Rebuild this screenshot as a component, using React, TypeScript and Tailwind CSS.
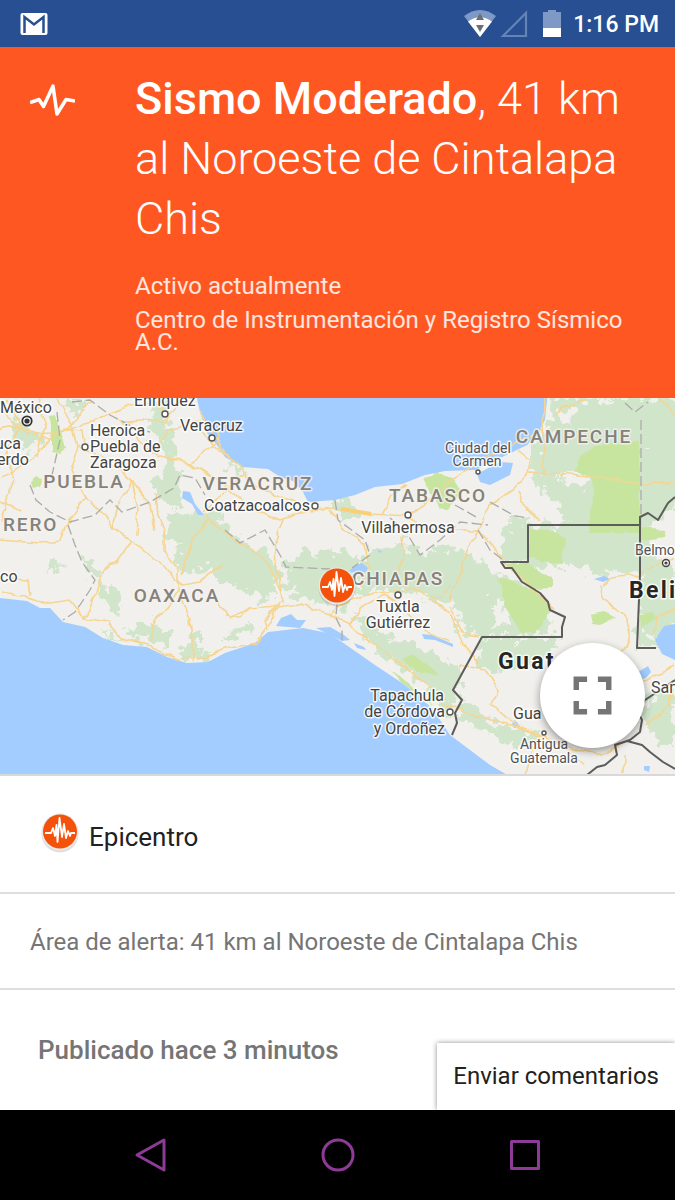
import type { ReactNode } from "react";
import { MdFullscreen } from "react-icons/md";

const GULF =
  "M195 390 L200 412 L207 433 L217 445 L225 457 L242 467 L268 469 L280 477 L293 481 L303 492 L308 502 L335 500 L355 495 L375 487 L402 484 L425 475 L445 471 L475 470 L500 458 L527 445 L537 435 L545 420 L548 390 Z";
const PACIFIC =
  "M0 598 L27 601 L40 608 L50 608 L63 622 L85 627 L103 638 L123 645 L147 647 L167 657 L187 663 L208 662 L225 653 L255 643 L268 632 L303 628 L328 633 L342 642 L375 665 L405 685 L432 708 L450 735 L470 750 L490 765 L516 780 L0 780 Z";

const LAKES = [
  "M477 474 L500 462 L513 463 L510 475 L490 485 L480 482 Z",
  "M276 626 L281 618 L291 614 L297 620 L306 620 L300 628 Z",
  "M316 628 L330 627 L344 635 L350 640 L342 641 L328 634 Z",
  "M354 643 L364 647 L366 650 L357 648 Z",
  "M349 571 L355 566 L362 563 L368 568 L366 572 L354 573 Z",
  "M183 491 L190 492 L195 504 L204 515 L198 515 L192 504 L182 498 Z",
  "M422 634 L432 635 L453 644 L453 647 L435 640 L424 639 Z",
  "M594 579 L604 576 L610 579 L603 582 Z",
  "M655 640 L664 626 L675 624 L675 660 L662 654 Z",
  "M638 672 L648 666 L651 672 L646 678 L640 680 Z",
  "M512 723 L517 722 L520 727 L514 728 Z",
  "M377 550 L382 551 L380 553 Z",
  "M644 766 L650 766 L649 772 L644 770 Z",
];

const FORESTS = [
  "M548 398 L685 398 L685 500 L660 520 L645 530 L660 560 L685 580 L685 610 L656 648 L637 648 L640 577 L602 572 L568 566 L552 572 L528 562 L528 527 L568 524 L556 510 L542 495 L535 475 L530 462 L535 445 L548 432 L552 418 Z",
  "M508 515 L528 518 L528 562 L502 561 L506 540 Z",
  "M155 398 L168 402 L168 420 L172 440 L172 458 L180 480 L185 505 L175 508 L158 500 L155 480 L165 470 L158 440 L148 425 Z",
  "M165 512 L190 515 L212 510 L225 525 L240 540 L268 552 L278 572 L275 598 L262 600 L240 590 L218 582 L215 562 L195 575 L180 570 L172 555 L180 548 L168 540 Z",
  "M286 572 L298 552 L330 550 L348 552 L362 562 L350 575 L352 600 L338 610 L310 600 L288 596 Z",
  "M362 560 L372 548 L402 543 L430 555 L440 545 L468 552 L498 575 L522 585 L548 608 L545 632 L482 637 L462 632 L455 605 L430 600 L412 592 L380 590 L356 596 Z",
  "M352 615 L372 622 L390 640 L410 645 L430 652 L455 664 L462 672 L452 700 L450 718 L430 690 L405 672 L375 650 Z",
  "M484 638 L560 638 L555 652 L525 662 L500 672 L478 668 L474 655 Z",
  "M460 698 L480 710 L490 722 L520 728 L545 735 L535 748 L500 742 L478 730 L458 722 Z",
  "M128 628 L150 622 L172 632 L165 645 L140 640 Z",
  "M175 652 L190 645 L192 632 L200 634 L200 650 L210 656 L205 660 L185 658 Z",
  "M100 590 L112 586 L124 596 L120 612 L105 608 Z",
  "M103 632 L110 630 L112 640 L124 643 L110 645 Z",
  "M335 500 L350 498 L358 512 L345 522 L337 515 Z",
  "M222 638 L235 628 L256 622 L258 627 L240 636 L226 644 Z",
  "M645 700 L675 690 L675 745 L655 740 L643 720 Z",
  "M18 418 L32 430 L44 440 L28 450 L14 436 Z",
  "M82 560 L95 562 L98 572 L86 574 Z",
  "M48 560 L62 564 L56 572 L46 568 Z",
  "M225 462 L238 466 L244 474 L232 470 Z",
  "M70 398 L82 398 L82 412 L72 416 Z",
];

const PARKS = [
  "M595 445 L640 442 L640 533 L590 533 L593 477 L575 472 L580 456 Z",
  "M530 528 L548 530 L565 538 L563 565 L540 562 L530 558 Z",
  "M498 578 L522 585 L535 590 L552 606 L535 633 L522 633 L508 612 Z",
  "M503 564 L528 563 L540 572 L553 576 L553 587 L535 588 L522 582 L512 570 Z",
  "M49 416 L56 415 L60 432 L66 446 L60 456 L52 454 L52 440 Z",
  "M30 483 L37 477 L43 479 L40 487 L33 489 Z",
  "M425 480 L438 473 L455 478 L462 492 L450 510 L440 506 L430 494 Z",
  "M390 670 L400 676 L412 687 L432 704 L424 702 L402 683 Z",
  "M402 660 L415 655 L432 668 L440 676 L425 672 L412 668 Z",
  "M640 528 L664 530 L666 537 L642 540 Z",
  "M590 615 L605 612 L616 618 L600 625 L592 624 Z",
  "M640 614 L654 612 L656 620 L640 624 Z",
];

const CLEARINGS = [
  "M558 412 L565 406 L575 412 L572 420 L558 418 Z",
  "M556 478 L582 472 L592 480 L576 486 Z",
  "M540 500 L556 498 L560 506 L548 514 Z",
  "M494 598 L502 600 L510 622 L494 624 Z",
  "M600 399 L612 399 L608 405 L600 404 Z",
  "M642 448 L648 444 L646 454 Z",
  "M655 528 L675 505 L685 540 L668 540 Z",
  "M540 568 L552 562 L560 570 L552 574 Z",
  "M642 642 L656 640 L656 648 L640 648 Z",
];

const ROADS = [
  "M0 430 C20 420 36 438 58 432 S95 420 118 410 S145 400 165 412",
  "M0 476 Q20 470 35 455 T70 425 L92 402",
  "M8 400 L20 425 L5 460 L15 480 L2 520",
  "M0 412 L25 432 L50 440 M38 398 L45 425 L38 455 M62 428 L82 430 L84 445",
  "M58 398 L74 430 L78 447 L100 455 L132 480 L142 494 L150 504 L155 530",
  "M78 447 L70 470 L80 490 L85 498 L105 515 L113 528 L132 540 L150 555 L168 570 L182 585 L200 582 L222 565",
  "M85 498 L68 520 L60 540 L40 543 L0 540",
  "M132 540 L118 562 L105 570 L96 590 L90 610 L83 618",
  "M132 480 L118 505 L113 528 M132 480 L138 510 L136 535",
  "M155 495 L157 515 L165 535 L165 550 L178 570 L178 590 L165 610 L152 625 L153 643",
  "M178 590 L190 620 L192 640 L192 660",
  "M0 592 L25 596 L42 604 L70 600 L83 618 L108 622 L120 638 L150 646 L178 658 L205 656 L225 648 L255 642 L268 625 L278 607 L300 604 L330 615 L350 625 L370 640 L395 660 L425 682 L445 705 L465 712 L500 722 L530 732 L550 745",
  "M155 456 L192 464 L215 442 L220 430",
  "M192 464 L225 485 L245 505 L280 520 L310 510 L335 508 L370 514 L410 516 L430 500 L450 480 L515 442 L545 430",
  "M118 420 L138 440 L155 456 L168 430 L202 420",
  "M188 398 L165 420 L120 422",
  "M202 432 L220 452 L242 465 L245 478 L262 490 L290 500 L310 510",
  "M203 512 L218 498 L245 475",
  "M203 512 L225 532 L250 548 L270 565 L278 585 L284 604",
  "M208 518 L190 545 L182 575",
  "M283 520 L275 540 L278 570 L282 600 L265 620",
  "M330 510 L345 530 L365 545 L370 570 L360 585",
  "M382 515 L392 495 L405 485",
  "M410 516 L420 530 L478 530 L490 505 L512 490 L528 475 L530 460 L518 450",
  "M478 530 L468 548 L460 575 L450 600",
  "M478 530 L492 545 L505 565 L540 595 L555 608",
  "M545 399 L543 473 M528 473 L570 475 L600 478 L640 484 L675 483",
  "M518 490 L525 505 L538 521",
  "M555 412 L585 400 M660 399 L675 415",
  "M280 606 L250 608 L230 618 L218 600",
  "M278 607 L264 620 L267 631 M225 615 L240 617 L250 608",
  "M330 615 L350 600 L375 593 L410 590 L440 598 L450 585",
  "M350 625 L358 610 L385 594 L400 605 L430 635 L450 642",
  "M395 583 L404 552 L402 535 M430 600 L450 612 L465 645 L478 665",
  "M450 605 L463 633 L480 635 M460 665 L485 670 L497 690 L492 705 L515 725 L540 735",
  "M540 735 L565 748 L585 765 M540 735 L530 755 L525 774",
  "M600 585 L604 600 L625 615 L630 640 L610 665 L645 680 L675 665",
  "M602 585 L612 578 L635 575 L660 565 L675 558",
  "M653 635 L658 618 L675 608 M645 725 L660 715 L675 690 M625 755 L625 774 M560 745 L600 755 L628 742",
  "M0 578 L28 580 L30 596 M200 410 L225 455 M0 502 L20 510",
];

const STATE_LINES = [
  "M57 412 L60 440 L52 475 M72 402 L90 400 L110 415 L135 428 L150 432",
  "M30 485 L36 500 L50 512 L70 522 L95 515 L110 500 L122 512 L150 502 L174 488 L180 475 L195 478 L205 495",
  "M68 525 L75 545 L82 562 L95 580 L90 590 L82 602 L75 612 L63 620",
  "M225 530 L240 543 L265 530 L280 555 L286 567 L330 569",
  "M335 500 L338 520 L365 540 L370 555 L352 568",
  "M337 604 L336 618 L342 630 L342 641",
  "M390 518 L405 530 L420 555 L440 540 L460 522 L488 525 M455 505 L478 518 M490 502 L515 516 L528 518",
  "M641 420 L641 515 M625 403 L635 412 L648 402",
  "M478 530 L490 550 L503 560",
];

const BORDERS = [
  "M640 525 L528 525 L528 562 L501 562 L505 568 L512 568 L522 582 L532 588 L540 593 L548 602 L550 610 L565 617 L562 627 L562 637 L482 637 L453 690 L462 700 L455 713 L457 723 L452 735",
  "M675 497 L668 503 L658 520 L648 513 L640 517 L640 575 L637 648 L656 648",
  "M587 775 L597 767 L605 765 L617 755 L615 745 L630 740 L640 732 L642 720 L637 710 L645 700 L675 680",
  "M627 741 L642 745 L650 752 L663 762 L675 769",
];

type Label = { text: string; x: number; y: number; end?: boolean; mid?: boolean };

const STATES: Label[] = [
  { text: "PUEBLA", x: 84, y: 488, mid: true },
  { text: "VERACRUZ", x: 258, y: 490, mid: true },
  { text: "TABASCO", x: 438, y: 502, mid: true },
  { text: "CAMPECHE", x: 574, y: 443, mid: true },
  { text: "OAXACA", x: 177, y: 602, mid: true },
  { text: "CHIAPAS", x: 398, y: 585, mid: true },
  { text: "RERO", x: 3, y: 531 },
];

const CITIES: Label[] = [
  { text: "México", x: 0, y: 413 },
  { text: "Enriquez", x: 134, y: 406 },
  { text: "Heroica", x: 90, y: 436 },
  { text: "Puebla de", x: 90, y: 452 },
  { text: "Zaragoza", x: 90, y: 468 },
  { text: "Veracruz", x: 180, y: 431 },
  { text: "uca", x: -5, y: 449 },
  { text: "erdo", x: -3, y: 465 },
  { text: "co", x: 0, y: 582 },
  { text: "Coatzacoalcos", x: 204, y: 511 },
  { text: "Villahermosa", x: 408, y: 533, mid: true },
  { text: "Tuxtla", x: 398, y: 612, mid: true },
  { text: "Gutiérrez", x: 398, y: 628, mid: true },
  { text: "Tapachula", x: 444, y: 701, end: true },
  { text: "de Córdova", x: 445, y: 717, end: true },
  { text: "y Ordoñez", x: 445, y: 734, end: true },
  { text: "Gua", x: 513, y: 719 },
  { text: "San", x: 651, y: 693 },
];

const TOWNS: Label[] = [
  { text: "Ciudad del", x: 478, y: 453, mid: true },
  { text: "Carmen", x: 477, y: 466, mid: true },
  { text: "Belmopán", x: 635, y: 555 },
  { text: "Antigua", x: 544, y: 749, mid: true },
  { text: "Guatemala", x: 544, y: 763, mid: true },
];

const COUNTRIES: Label[] = [
  { text: "Guatemala", x: 498, y: 669 },
  { text: "Belice", x: 629, y: 598 },
];

const DOTS = [
  [165, 414, 3], [212, 438, 3], [85, 447, 3], [315, 506, 3], [408, 515, 3],
  [398, 595, 3], [450, 712, 3], [478, 472, 2], [544, 733, 2],
];

function Labels({ items, className }: { items: Label[]; className: string }) {
  return (
    <g className={className} strokeWidth="3" strokeLinejoin="round" paintOrder="stroke">
      {items.map((l) => (
        <text key={l.text} x={l.x} y={l.y} textAnchor={l.mid ? "middle" : l.end ? "end" : "start"}>
          {l.text}
        </text>
      ))}
    </g>
  );
}

function Shapes({ items }: { items: string[] }) {
  return (
    <>
      {items.map((d) => (
        <path key={d} d={d} />
      ))}
    </>
  );
}

function RegionMap() {
  return (
    <svg className="block h-full w-full" viewBox="0 398 675 376" preserveAspectRatio="xMidYMid slice" role="img" aria-label="Mapa del epicentro">
      <defs>
        <filter id="ragged" x="-5%" y="-5%" width="110%" height="110%" colorInterpolationFilters="sRGB">
          <feTurbulence type="fractalNoise" baseFrequency="0.1" numOctaves="4" seed="4" />
          <feDisplacementMap in="SourceGraphic" scale="26" xChannelSelector="R" yChannelSelector="G" />
        </filter>
        <filter id="winding" x="-5%" y="-5%" width="110%" height="110%" colorInterpolationFilters="sRGB">
          <feTurbulence type="fractalNoise" baseFrequency="0.06" numOctaves="2" seed="9" />
          <feDisplacementMap in="SourceGraphic" scale="8" xChannelSelector="R" yChannelSelector="G" />
        </filter>
      </defs>
      <rect x="0" y="390" width="675" height="390" fill="#f2f0ed" />
      <g filter="url(#ragged)">
        <g fill="#d1e5cb"><Shapes items={FORESTS} /></g>
        <g fill="#f2f0ed"><Shapes items={CLEARINGS} /></g>
      </g>
      <g filter="url(#winding)" fill="#c8e5a0"><Shapes items={PARKS} /></g>
      <g fill="#a3ccff">
        <path d={GULF} />
        <path d={PACIFIC} />
        <Shapes items={LAKES} />
      </g>
      <g filter="url(#winding)" fill="none" stroke="#f5d591" strokeWidth="1.6" strokeLinejoin="round">
        <Shapes items={ROADS} />
      </g>
      <path d="M341 509 L371 514" stroke="#f9cf78" strokeWidth="4" />
      <g fill="none" stroke="#adaba8" strokeWidth="1.3" strokeDasharray="10 4">
        <Shapes items={STATE_LINES} />
      </g>
      <g fill="none" stroke="#5c5c5a" strokeWidth="2" strokeLinejoin="round">
        <Shapes items={BORDERS} />
      </g>
      <Labels items={STATES} className="fill-[#85827a] stroke-[#f5f3f0]/80 text-[19px] font-medium tracking-widest" />
      <Labels items={CITIES} className="fill-[#444444] stroke-white/80 text-[16px]" />
      <Labels items={TOWNS} className="fill-[#505355] stroke-white/80 text-[14px]" />
      <Labels items={COUNTRIES} className="fill-[#262626] stroke-white/80 text-[23px] font-bold tracking-widest" />
      {DOTS.map(([x, y, r]) => (
        <circle key={`${x}-${y}`} cx={x} cy={y} r={r} fill="#fff" stroke="#555" strokeWidth="1.4" />
      ))}
      <circle cx="27" cy="421" r="4.7" fill="#fff" stroke="#333" strokeWidth="1.8" />
      <circle cx="27" cy="421" r="2.6" fill="#333" />
      <circle cx="666" cy="563" r="3.5" fill="#fff" stroke="#444" strokeWidth="1.4" />
      <circle cx="666" cy="563" r="1.6" fill="#444" />
      <g transform="translate(317 566)">
        <EpicenterShape />
      </g>
    </svg>
  );
}

function EpicenterShape() {
  return (
    <>
      <ellipse cx="20" cy="22" rx="18.5" ry="18.5" fill="#000" opacity="0.13" />
      <circle cx="20" cy="20" r="18.5" fill="#e9e9e9" />
      <circle cx="20" cy="19.5" r="17" fill="#f4510b" />
      <path d="M5 21 H11 L13 16 L15 24 L16.500 13 L17.500 30 L19.500 6 L22 25 L24 12 L26 26 L28 19 L30 24 L31 21 H35" fill="none" stroke="#fff" strokeWidth="1.8" strokeLinejoin="round" />
    </>
  );
}

function StatusBar() {
  return (
    <div className="flex h-[47px] items-center justify-between bg-[#274f91] pr-4 pl-5 text-white">
      <svg className="h-6 w-7" viewBox="0 0 28 24" role="img" aria-label="Gmail">
        <rect x="0.500" y="1" width="27" height="22" rx="2" fill="#fff" />
        <path d="M4.500 21 V5 L14 12.500 L23.500 5 V21" fill="none" stroke="#274f91" strokeWidth="2.500" />
      </svg>
      <div className="flex items-center">
        <svg className="h-7 w-32" viewBox="460 10 100 28" preserveAspectRatio="xMaxYMid meet" overflow="visible" aria-hidden="true">
          <path d="M463 16 Q479 4 495 16 L479 37 Z" fill="#7f99c6" />
          <path d="M467 21.500 Q479 13 491 21.500 L479 37 Z" fill="#fff" />
          <path d="M479 13 L483 20 H475 Z M475 25 H483 L479 32 Z" fill="#6b6f75" />
          <path d="M525 13 V36 H502 Z" fill="none" stroke="#6583b7" strokeWidth="2.200" />
          <path d="M542 12 H547 V10 H555 V12 H560 V28 H542 Z" fill="#7f99c6" />
          <rect x="542" y="28" width="18" height="9" fill="#fff" />
        </svg>
        <time className="ml-3 pt-0.5 text-[23px] leading-7 font-medium">1:16 PM</time>
      </div>
    </div>
  );
}

function AlertHeader() {
  return (
    <header className="flex min-h-[351px] bg-[#ff5722] px-[30px] pt-[22px] text-white">
      <svg className="mt-3 h-[38px] w-[45px] shrink-0" viewBox="0 0 45 38" aria-hidden="true">
        <path d="M0 21.500 L9 18.500 L13.500 25.500 L23 5 L27 33 L36 18.500 L45 20" fill="none" stroke="#fff" strokeWidth="3.500" strokeLinejoin="round" />
      </svg>
      <div className="ml-[60px] min-w-0 flex-1">
        <h1 className="text-[45px] leading-[60px] font-light">
          <strong className="font-medium">Sismo Moderado</strong>, 41 km al Noroeste de Cintalapa Chis
        </h1>
        <p className="mt-[26px] text-[24px] leading-[22px] text-white/85">Activo actualmente</p>
        <p className="mt-3 text-[24px] leading-[22px] text-white/85">Centro de Instrumentación y Registro Sísmico A.C.</p>
      </div>
    </header>
  );
}

function NavButton({ label, children }: { label: string; children: ReactNode }) {
  return (
    <button type="button" aria-label={label} className="flex h-12 w-12 items-center justify-center">
      <svg className="h-9 w-9" viewBox="0 0 36 36" fill="none" stroke="#8e3a97" strokeWidth="3" strokeLinejoin="round">
        {children}
      </svg>
    </button>
  );
}

export default function App() {
  return (
    <div className="flex min-h-screen flex-col bg-white font-['Roboto',sans-serif]">
      <StatusBar />
      <AlertHeader />
      <main className="relative flex flex-1 flex-col">
        <section className="relative h-[378px] border-b-2 border-[#d9d9d9]">
          <RegionMap />
          <button type="button" aria-label="Pantalla completa" className="absolute right-[30px] bottom-[26px] flex h-[105px] w-[105px] items-center justify-center rounded-full bg-white text-[#757575] shadow-[0_3px_8px_rgba(0,0,0,0.4)]">
            <MdFullscreen size={65} />
          </button>
        </section>
        <section className="flex h-[118px] items-center border-b-2 border-[#dedede] px-10 text-[26px] text-[#212121]">
          <svg className="h-11 w-10" viewBox="0 0 40 44" aria-hidden="true">
            <EpicenterShape />
          </svg>
          <span className="ml-[9px] pt-1.5">Epicentro</span>
        </section>
        <p className="flex h-24 items-center border-b-2 border-[#dedede] px-[30px] pt-0.5 text-[24px] text-[#757575]">
          Área de alerta: 41 km al Noroeste de Cintalapa Chis
        </p>
        <p className="px-[38px] pt-11 text-[26px] leading-8 font-medium text-[#757575]">Publicado hace 3 minutos</p>
        <button type="button" className="absolute right-0 bottom-0 h-[67px] bg-white px-4 pb-0.5 text-[24px] text-[#212121] shadow-[0_0_5px_rgba(0,0,0,0.45)]">
          Enviar comentarios
        </button>
      </main>
      <nav className="relative flex h-[90px] items-center justify-center gap-[139px] bg-black">
        <NavButton label="Atrás"><path d="M31 3 V33 L4 18 Z" /></NavButton>
        <NavButton label="Inicio"><circle cx="18" cy="18" r="15" /></NavButton>
        <NavButton label="Recientes"><rect x="4.500" y="4.500" width="27" height="27" /></NavButton>
      </nav>
    </div>
  );
}
